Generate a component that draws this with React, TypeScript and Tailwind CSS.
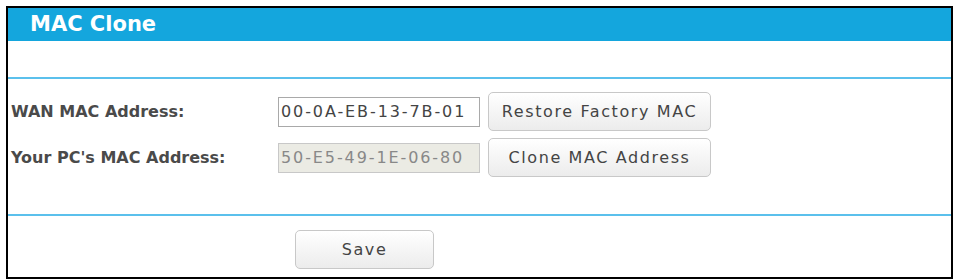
export default function App() {
  return (
    <div className="w-[954px] h-[279px] bg-white pl-[6px] pt-[6px] font-['DejaVu_Sans',sans-serif]">
      <div className="w-[947px] h-[273px] border-2 border-black flex flex-col">
        {/* header */}
        <div className="h-[33px] bg-[#14a6dd] pl-[22px] flex items-center">
          <h1 className="text-[21px] font-bold text-white">MAC Clone</h1>
        </div>
        <div className="h-[36px]" />
        <div className="h-[2px] bg-[#5bc0ec]" />

        {/* fields */}
        <div className="pt-[13px] flex flex-col gap-[7px] h-[135px]">
          <div className="flex items-center">
            <label className="w-[270px] pl-[3px] text-[16px] font-bold text-[#4a4a4a]">WAN MAC Address:</label>
            <input
              type="text"
              defaultValue="00-0A-EB-13-7B-01"
              className="w-[202px] h-[30px] px-[2px] border border-[#a9a9a9] bg-white text-[16px] tracking-[1.9px] text-[#444]"
            />
            <button className="ml-[8px] w-[223px] h-[39px] rounded-[5px] border border-[#c8c8c8] bg-gradient-to-b from-white to-[#ececec] text-[16px] tracking-[1.6px] text-[#444]">
              Restore Factory MAC
            </button>
          </div>
          <div className="flex items-center">
            <label className="w-[270px] pl-[3px] text-[16px] font-bold text-[#4a4a4a]">Your PC's MAC Address:</label>
            <input
              type="text"
              readOnly
              defaultValue="50-E5-49-1E-06-80"
              className="w-[202px] h-[30px] px-[2px] border border-[#c8c8c8] bg-[#ebebe4] text-[16px] tracking-[1.9px] text-[#888]"
            />
            <button className="ml-[8px] w-[223px] h-[39px] rounded-[5px] border border-[#c8c8c8] bg-gradient-to-b from-white to-[#ececec] text-[16px] tracking-[1.6px] text-[#444]">
              Clone MAC Address
            </button>
          </div>
        </div>
        <div className="h-[2px] bg-[#5bc0ec]" />

        {/* save */}
        <div className="pl-[287px] pt-[14px]">
          <button className="w-[139px] h-[39px] rounded-[5px] border border-[#c8c8c8] bg-gradient-to-b from-white to-[#ececec] text-[16px] tracking-[1.6px] text-[#444]">
            Save
          </button>
        </div>
      </div>
    </div>
  );
}
